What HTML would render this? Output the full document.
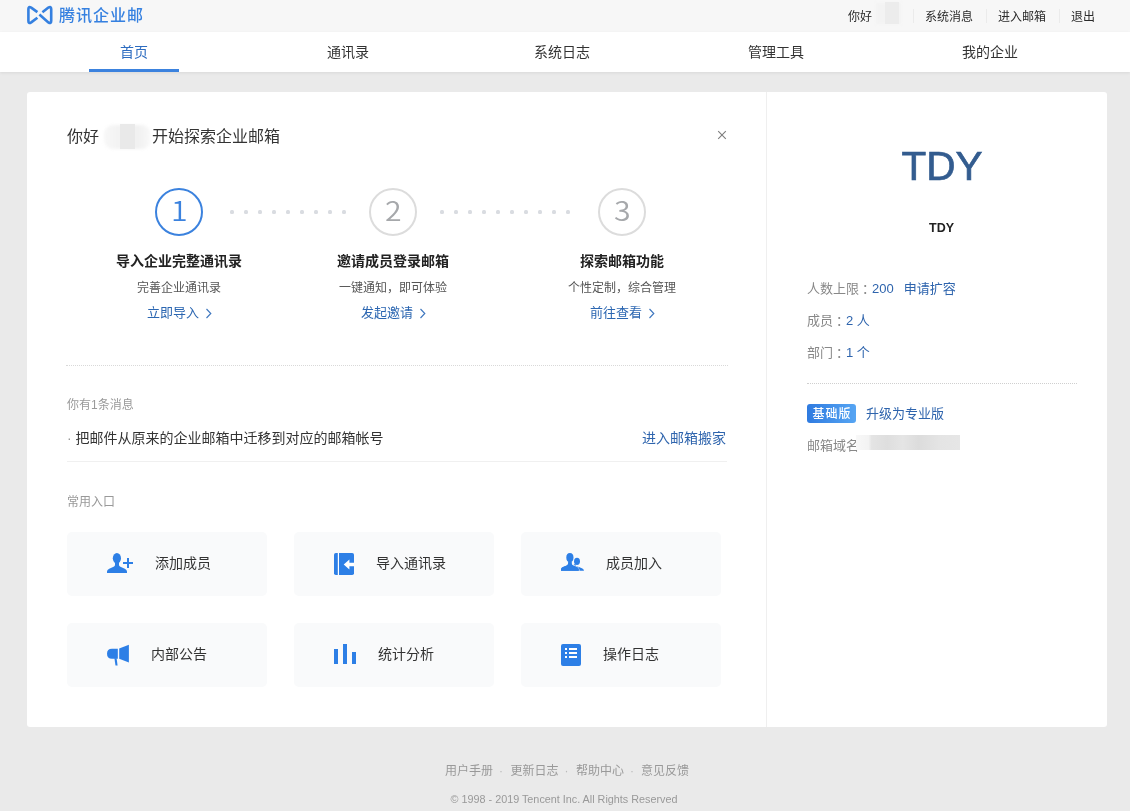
<!DOCTYPE html>
<html lang="zh-CN">
<head>
<meta charset="utf-8">
<title>腾讯企业邮</title>
<style>
*{box-sizing:border-box;margin:0;padding:0}
html,body{width:1130px;height:811px;overflow:hidden}
body{background:#eaeaea;font-family:"Liberation Sans","Noto Sans CJK SC",sans-serif;font-size:14px;color:#333;position:relative;font-weight:400}
a{text-decoration:none;color:inherit}
.abs{position:absolute;white-space:nowrap}
.topbar{position:absolute;left:0;top:0;width:1130px;height:32px;background:#f7f7f7}
.logo-txt{left:59px;top:4px;font-size:16px;line-height:24px;font-weight:500;color:#3580e0;letter-spacing:1px}
.toplink{font-size:12px;line-height:16px;top:9px;color:#2a2a2a}
.sep{position:absolute;top:9px;width:1px;height:14px;background:#ebebeb}
.nav{position:absolute;left:0;top:32px;width:1130px;height:40px;background:#fff;box-shadow:0 1px 3px rgba(0,0,0,.08)}
.tab{position:absolute;top:0;width:214px;height:40px;line-height:40px;text-align:center;font-size:14px;color:#333}
.tab.on{color:#2d6cc0}
.tab.on:after{content:"";position:absolute;left:62px;bottom:0;width:90px;height:3px;background:#3b82de}
.card{position:absolute;left:27px;top:92px;width:1080px;height:635px;background:#fff;border-radius:3px}
.vline{position:absolute;left:766px;top:92px;width:1px;height:635px;background:#efefef}
.blue{color:#2e64ad}
.gray{color:#999}
.step-c{position:absolute;width:48px;height:48px;border-radius:50%;border:2px solid #dcdcdc;text-align:center;font-size:27px;line-height:39px;font-weight:350;color:#a6a8ab;font-family:"Noto Sans CJK SC","Liberation Sans",sans-serif}
.step-c b{display:inline-block;font-weight:inherit;transform:scaleX(1.12)}
.step-c.on{border-color:#3b82de;color:#3b82de}
.step-t{font-size:14px;font-weight:700;color:#222;text-align:center;width:200px;line-height:20px}
.step-d{font-size:12px;color:#555;text-align:center;width:200px;line-height:16px}
.step-a{font-size:13px;color:#2b66b1;line-height:20px}
.chev{position:absolute;width:7px;height:11px}
.dots{position:absolute;top:210px;height:4px}
.dots i{position:absolute;top:0;width:4px;height:4px;border-radius:1.5px;background:#d9dce1}
.tile{position:absolute;width:200px;height:64px;border-radius:5px;background:#f9fafb}
.tile span{position:absolute;top:21px;font-size:14px;line-height:20px;color:#333;white-space:nowrap}
.tile svg{position:absolute}
.info{font-size:13px;line-height:20px;color:#888;left:807px}
.cl{position:relative;left:3px}
.foot{font-size:12px;color:#999;line-height:16px}
</style>
</head>
<body>
<div id="wrap" style="position:absolute;left:0;top:0;width:1130px;height:811px;will-change:transform">
<div class="topbar"></div>
<svg class="abs" style="left:26px;top:4px" width="28" height="22" viewBox="26 4 28 22"><g fill="none" stroke="#3580e0" stroke-width="2.6" stroke-linecap="butt" stroke-linejoin="round"><path d="M37.4 12.1L31.2 7.6Q28.4 5.8 28.4 9V21Q28.4 24.2 31.2 22.4L37.4 17.7"/><path d="M42.4 12.3L48.4 7.6Q51.2 5.8 51.2 9V21Q51.2 24.2 48.4 22.4L39.4 14.6"/></g></svg>
<div class="abs logo-txt">腾讯企业邮</div>
<div class="abs toplink" style="left:848px">你好</div>
<div class="abs" style="left:876px;top:3px;width:25px;height:21px;background:#f3f3f3;filter:blur(1.5px)"></div>
<div class="abs" style="left:885px;top:2px;width:14px;height:22px;background:#ececec;filter:blur(0.6px)"></div>
<div class="sep" style="left:913px"></div>
<div class="abs toplink" style="left:925px">系统消息</div>
<div class="sep" style="left:986px"></div>
<div class="abs toplink" style="left:998px">进入邮箱</div>
<div class="sep" style="left:1059px"></div>
<div class="abs toplink" style="left:1071px">退出</div>

<div class="nav">
  <div class="tab on" style="left:27px">首页</div>
  <div class="tab" style="left:241px">通讯录</div>
  <div class="tab" style="left:455px">系统日志</div>
  <div class="tab" style="left:669px">管理工具</div>
  <div class="tab" style="left:883px">我的企业</div>
</div>

<div class="card"></div>
<div class="vline"></div>

<!-- welcome -->
<div class="abs" style="left:67px;top:126px;font-size:16px;line-height:22px;color:#333">你好</div>
<div class="abs" style="left:104px;top:125px;width:47px;height:24px;border-radius:9px;background:linear-gradient(90deg,#f7f7f7,#f3f3f3 30%,#f0f0f0 68%,#f4f4f4 85%,#fafafa);filter:blur(1.5px)"></div>
<div class="abs" style="left:120px;top:124px;width:15px;height:25px;background:#e9e9e9;filter:blur(0.6px)"></div>
<div class="abs" style="left:152px;top:126px;font-size:16px;line-height:22px;color:#333">开始探索企业邮箱</div>
<svg class="abs" style="left:717px;top:130px" width="10" height="10" viewBox="0 0 10 10"><path d="M1.2 1.2L8.8 8.8M8.8 1.2L1.2 8.8" stroke="#7d7d7d" stroke-width="1.1" fill="none"/></svg>

<div class="step-c on" style="left:155px;top:188px"><b>1</b></div>
<div class="step-c" style="left:369px;top:188px"><b>2</b></div>
<div class="step-c" style="left:598px;top:188px"><b>3</b></div>
<div class="dots" style="left:230px"><i style="left:0"></i><i style="left:14px"></i><i style="left:28px"></i><i style="left:42px"></i><i style="left:56px"></i><i style="left:70px"></i><i style="left:84px"></i><i style="left:98px"></i><i style="left:112px"></i></div>
<div class="dots" style="left:440px"><i style="left:0"></i><i style="left:14px"></i><i style="left:28px"></i><i style="left:42px"></i><i style="left:56px"></i><i style="left:70px"></i><i style="left:84px"></i><i style="left:98px"></i><i style="left:112px"></i><i style="left:126px"></i></div>

<div class="abs step-t" style="left:79px;top:251px">导入企业完整通讯录</div>
<div class="abs step-t" style="left:293px;top:251px">邀请成员登录邮箱</div>
<div class="abs step-t" style="left:522px;top:251px">探索邮箱功能</div>
<div class="abs step-d" style="left:79px;top:280px">完善企业通讯录</div>
<div class="abs step-d" style="left:293px;top:280px">一键通知，即可体验</div>
<div class="abs step-d" style="left:522px;top:280px">个性定制，综合管理</div>
<div class="abs step-a" style="left:147px;top:303px">立即导入</div><svg class="chev" style="left:205px;top:308px" viewBox="0 0 7 11"><path d="M1.5 1L5.8 5.5L1.5 10" fill="none" stroke="#3f77bf" stroke-width="1.15"/></svg>
<div class="abs step-a" style="left:361px;top:303px">发起邀请</div><svg class="chev" style="left:419px;top:308px" viewBox="0 0 7 11"><path d="M1.5 1L5.8 5.5L1.5 10" fill="none" stroke="#3f77bf" stroke-width="1.15"/></svg>
<div class="abs step-a" style="left:590px;top:303px">前往查看</div><svg class="chev" style="left:648px;top:308px" viewBox="0 0 7 11"><path d="M1.5 1L5.8 5.5L1.5 10" fill="none" stroke="#3f77bf" stroke-width="1.15"/></svg>

<div class="abs" style="left:66px;top:365px;width:662px;height:0;border-top:1px dotted #d9d9d9"></div>
<div class="abs gray" style="left:67px;top:397px;font-size:12px;line-height:16px">你有1条消息</div>
<div class="abs" style="left:67px;top:428px;font-size:14px;line-height:20px;color:#333"><span style="color:#999;display:inline-block;width:8.5px">·</span>把邮件从原来的企业邮箱中迁移到对应的邮箱帐号</div>
<div class="abs blue" style="left:526px;width:200px;text-align:right;top:428px;font-size:14px;line-height:20px">进入邮箱搬家</div>
<div class="abs" style="left:67px;top:461px;width:660px;height:1px;background:#f0f0f0"></div>
<div class="abs gray" style="left:67px;top:494px;font-size:12px;line-height:16px">常用入口</div>

<div class="tile" style="left:67px;top:532px"><span style="left:88px">添加成员</span></div>
<div class="tile" style="left:294px;top:532px"><span style="left:82px">导入通讯录</span></div>
<div class="tile" style="left:521px;top:532px"><span style="left:85px">成员加入</span></div>
<div class="tile" style="left:67px;top:623px"><span style="left:84px">内部公告</span></div>
<div class="tile" style="left:294px;top:623px"><span style="left:84px">统计分析</span></div>
<div class="tile" style="left:521px;top:623px"><span style="left:82px">操作日志</span></div>

<svg class="abs" style="left:105px;top:551px" width="30" height="24" viewBox="105 551 30 24"><g fill="#2d7fe6"><ellipse cx="116.9" cy="558.2" rx="4.1" ry="5.3"/><path d="M115 561.5V565Q115 566.2 113.6 566.8L109.2 568.8Q107 569.8 107 571.6V573H127V571.6Q127 569.8 124.8 568.8L120.4 566.8Q119 566.2 119 565V561.5Z"/><rect x="123" y="562" width="10" height="2"/><rect x="127" y="558" width="2" height="10"/></g></svg>
<svg class="abs" style="left:332px;top:551px" width="24" height="26" viewBox="332 551 24 26"><rect x="334" y="553" width="20" height="22" rx="1.8" fill="#2d7fe6"/><rect x="337.8" y="553" width="1.2" height="22" fill="#fff"/><path d="M343.7 564.4L349.4 559.6V562.8H354V566.2H349.4V569.4Z" fill="#fff"/></svg>
<svg class="abs" style="left:559px;top:551px" width="27" height="22" viewBox="559 551 27 22"><g fill="#2d7fe6"><ellipse cx="577" cy="561.3" rx="3" ry="3.6"/><path d="M575.6 563.5V566Q579 567 582.4 568.4Q584 569.2 584 570.8H572V566Z"/></g><g fill="#2d7fe6" stroke="#f9fafb" stroke-width="1.2" paint-order="stroke"><path d="M568.2 560.5V563.6Q568.2 564.8 566.8 565.4L563 567.1Q561 568 561 569.6V570.8H578.8V569.6Q578.8 568 576.8 567.1L573 565.4Q571.6 564.8 571.6 563.6V560.5Z"/><ellipse cx="569.9" cy="557.5" rx="3.6" ry="4.5"/></g><g fill="#2d7fe6"><path d="M568.2 560.5V563.6Q568.2 564.8 566.8 565.4L563 567.1Q561 568 561 569.6V570.8H578.8V569.6Q578.8 568 576.8 567.1L573 565.4Q571.6 564.8 571.6 563.6V560.5Z"/></g></svg>
<svg class="abs" style="left:105px;top:642px" width="26" height="26" viewBox="105 642 26 26"><g fill="#2d7fe6"><path d="M117.8 648.8H112Q107 648.8 107 653.75Q107 658.7 112 658.7H117.8Z"/><path d="M114.4 658.2L115.5 665.4H117.6L116.6 658.2Z"/><path d="M119.2 648.5L128.9 644.8V662.4L119.2 658.7Z"/></g></svg>
<svg class="abs" style="left:332px;top:642px" width="26" height="24" viewBox="332 642 26 24"><g fill="#2d7fe6"><rect x="334" y="649" width="4" height="15"/><rect x="343" y="644" width="4" height="20"/><rect x="352" y="652" width="4" height="12"/></g></svg>
<svg class="abs" style="left:559px;top:642px" width="24" height="26" viewBox="559 642 24 26"><rect x="561" y="644" width="20" height="22" rx="2" fill="#2d7fe6"/><g fill="#fff"><rect x="565" y="648" width="2" height="2"/><rect x="569" y="648" width="8" height="2"/><rect x="565" y="652" width="2" height="2"/><rect x="569" y="652" width="8" height="2"/><rect x="565" y="656" width="2" height="2"/><rect x="569" y="656" width="8" height="2"/></g></svg>

<!-- right panel -->
<div class="abs" style="left:842px;width:200px;text-align:center;top:140px;font-size:40.5px;line-height:52px;color:#335c8f;font-weight:400;-webkit-text-stroke:0.7px #335c8f">TDY</div>
<div class="abs" style="left:841.5px;width:200px;text-align:center;top:218px;font-size:12.5px;line-height:20px;color:#222;font-weight:700">TDY</div>
<div class="abs info" style="top:279px">人数上限<span class="cl">：</span><span class="blue">200</span><span class="blue" style="margin-left:10px">申请扩容</span></div>
<div class="abs info" style="top:311px">成员<span class="cl">：</span><span class="blue">2 人</span></div>
<div class="abs info" style="top:343px">部门<span class="cl">：</span><span class="blue">1 个</span></div>
<div class="abs" style="left:807px;top:383px;width:270px;height:0;border-top:1px dotted #cfcfcf"></div>
<div class="abs" style="left:807px;top:404px;width:49px;height:19px;border-radius:3px;background:linear-gradient(90deg,#2f7be0,#56a5f3);color:#fff;font-size:12px;font-weight:500;letter-spacing:1px;padding-left:1px;line-height:21px;overflow:hidden;text-align:center">基础版</div>
<div class="abs blue" style="left:866px;top:404px;font-size:13px;line-height:20px">升级为专业版</div>
<div class="abs" style="left:807px;top:436px;font-size:13px;line-height:20px;color:#888">邮箱域名</div>
<div class="abs" style="left:856px;top:435px;width:104px;height:15px;background:linear-gradient(90deg,#f8f8f8 0,#f3f3f3 12%,#e4e4e4 15%,#dedede 30%,#e5e5e5 45%,#dcdcdc 60%,#e4e4e4 80%,#e6e6e6 100%)"></div>

<!-- footer -->
<div class="abs foot" style="left:445px;top:763px">用户手册</div>
<div class="abs foot" style="left:510.5px;top:763px">更新日志</div>
<div class="abs foot" style="left:576px;top:763px">帮助中心</div>
<div class="abs foot" style="left:641px;top:763px">意见反馈</div>
<div class="abs foot" style="left:499px;top:763px;color:#bbb">·</div>
<div class="abs foot" style="left:564.5px;top:763px;color:#bbb">·</div>
<div class="abs foot" style="left:630px;top:763px;color:#bbb">·</div>
<div class="abs foot" style="left:364px;width:400px;text-align:center;top:792px;font-size:10.8px;line-height:14px;font-weight:400">© 1998 - 2019 Tencent Inc. All Rights Reserved</div>
</div>
</body>
</html>
